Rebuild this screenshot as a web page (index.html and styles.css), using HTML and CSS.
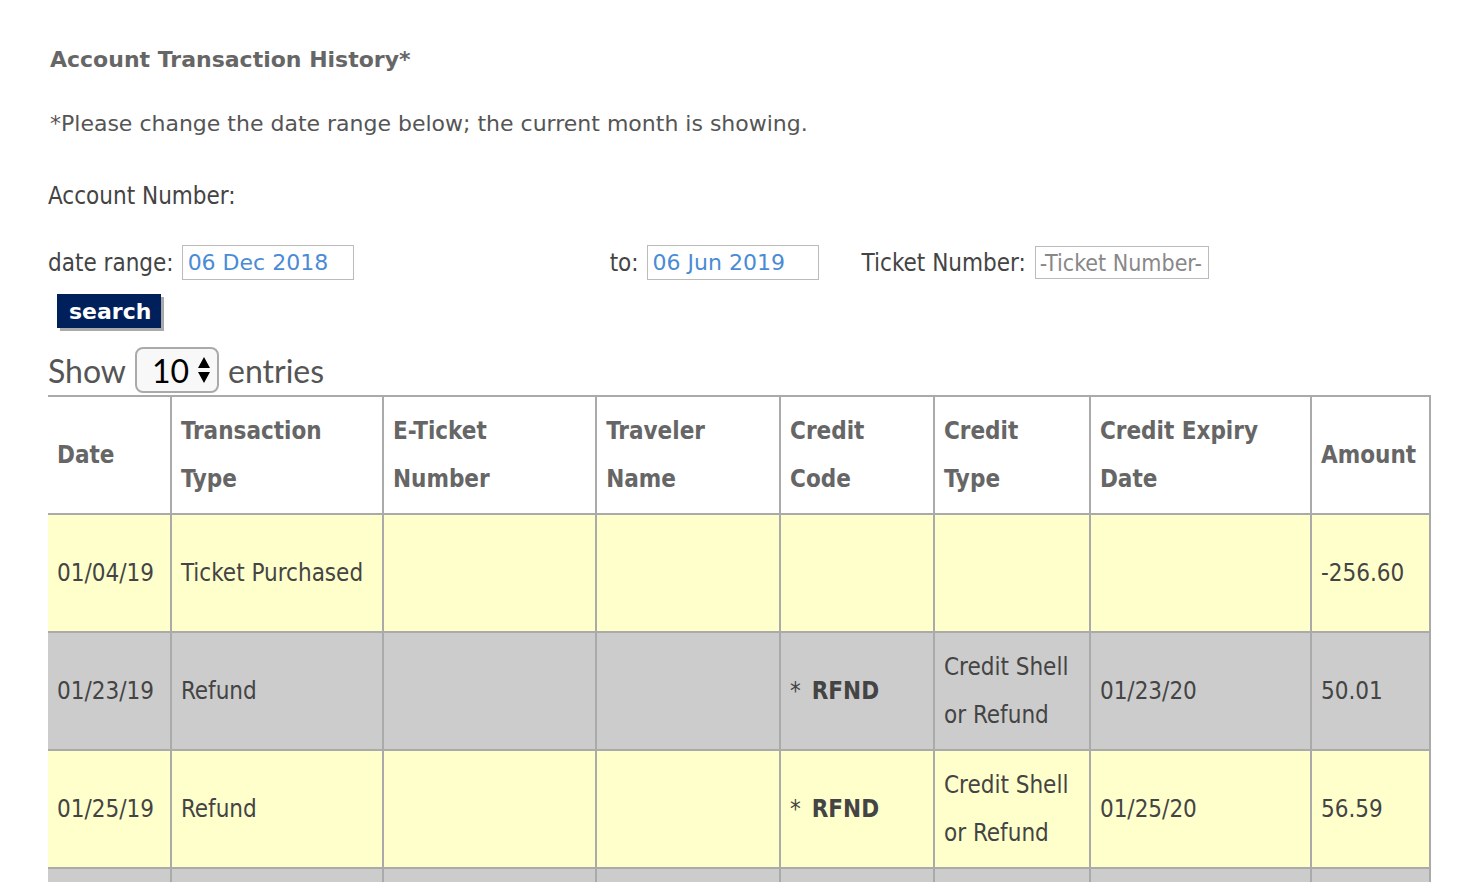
FILE: index.html
```html
<!DOCTYPE html>
<html lang="en">
<head>
    <meta charset="UTF-8">
    <title>Account Transaction History</title>
    <link rel="stylesheet" href="styles.css">
</head>
<body>
    <div class="history">
        <h3 class="title">Account Transaction History*</h3>
        <p class="note">*Please change the date range below; the current month is showing.</p>
        <div class="account">Account Number:</div>

        <form class="filters">
            <div class="filter-row">
                <label class="field">date range: <input type="text" class="date" value="06 Dec 2018"></label>
                <label class="field field-to">to: <input type="text" class="date" value="06 Jun 2019"></label>
                <label class="field field-ticket">Ticket Number: <input type="text" class="ticket" placeholder="-Ticket Number-"></label>
            </div>
            <button type="button" class="search">search</button>
        </form>

        <div class="length">
            Show
            <span class="select">10
                <svg width="14" height="30" viewBox="0 0 14 30"><path d="M7 2 L13 13 L1 13 Z M1 17 L13 17 L7 28 Z" fill="#000"/></svg>
            </span>
            entries
        </div>

        <table class="transactions">
            <thead>
                <tr>
                    <th class="c-date">Date</th>
                    <th class="c-type">Transaction<br>Type</th>
                    <th class="c-ticket">E-Ticket<br>Number</th>
                    <th class="c-name">Traveler<br>Name</th>
                    <th class="c-code">Credit<br>Code</th>
                    <th class="c-ctype">Credit<br>Type</th>
                    <th class="c-expiry">Credit Expiry<br>Date</th>
                    <th class="c-amount">Amount</th>
                </tr>
            </thead>
            <tbody>
                <tr class="odd">
                    <td>01/04/19</td>
                    <td>Ticket Purchased</td>
                    <td></td>
                    <td></td>
                    <td></td>
                    <td></td>
                    <td></td>
                    <td>-256.60</td>
                </tr>
                <tr class="even">
                    <td>01/23/19</td>
                    <td>Refund</td>
                    <td></td>
                    <td></td>
                    <td>* <b>RFND</b></td>
                    <td>Credit Shell<br>or Refund</td>
                    <td>01/23/20</td>
                    <td>50.01</td>
                </tr>
                <tr class="odd">
                    <td>01/25/19</td>
                    <td>Refund</td>
                    <td></td>
                    <td></td>
                    <td>* <b>RFND</b></td>
                    <td>Credit Shell<br>or Refund</td>
                    <td>01/25/20</td>
                    <td>56.59</td>
                </tr>
                <tr class="even">
                    <td></td>
                    <td></td>
                    <td></td>
                    <td></td>
                    <td></td>
                    <td></td>
                    <td></td>
                    <td></td>
                </tr>
            </tbody>
        </table>
    </div>
</body>
</html>
```

FILE: styles.css
```css
body {
    margin: 0;
    background: #fff;
    font-family: "DejaVu Sans", Verdana, sans-serif;
    color: #444;
}

.history {
    padding: 47px 0 0 48px;
    width: 1383px;
}

.title {
    margin: 0 0 0 2px;
    font-size: 22px;
    line-height: 26px;
    font-weight: bold;
    color: #666;
}

.note {
    margin: 38px 0 0 2px;
    font-size: 22px;
    line-height: 26px;
    color: #555;
}

.account {
    margin-top: 45px;
    font-family: "DejaVu Sans Condensed", Tahoma, sans-serif;
    font-size: 24px;
    line-height: 28px;
    color: #444;
}

.filters {
    margin-top: 35px;
}

.filter-row {
    display: flex;
    align-items: center;
    height: 35px;
    font-family: "DejaVu Sans Condensed", Tahoma, sans-serif;
    font-size: 24px;
    color: #444;
}

.field {
    display: inline-flex;
    align-items: center;
    gap: 8px;
}

.field-to {
    margin-left: 256px;
}

.field-ticket {
    margin-left: 43px;
    gap: 9px;
}

.field input {
    box-sizing: border-box;
    height: 35px;
    border: 1px solid #bbb;
    padding: 2px 5px;
    font-family: "DejaVu Sans", Verdana, sans-serif;
    font-size: 22px;
    color: #4a8bd6;
    outline: none;
}

.date {
    width: 172px;
}

.field .ticket {
    width: 174px;
    height: 33px;
    padding: 2px 4px;
    font-family: "DejaVu Sans Condensed", Tahoma, sans-serif;
    font-size: 23px;
}

.ticket::placeholder {
    color: #888;
}

.search {
    display: block;
    margin: 14px 0 0 9px;
    padding: 0 12px;
    width: 104px;
    height: 34px;
    border: none;
    background: #00205b;
    color: #fff;
    font-family: "DejaVu Sans", Verdana, sans-serif;
    font-size: 22px;
    font-weight: bold;
    box-shadow: 3px 3px 0 #aaa;
}

.length {
    display: flex;
    align-items: center;
    gap: 9px;
    height: 46px;
    margin-top: 19px;
    font-family: Lato, "Noto Sans", sans-serif;
    font-size: 32px;
    color: #555;
}

.select {
    display: inline-flex;
    align-items: center;
    justify-content: space-between;
    box-sizing: border-box;
    width: 84px;
    height: 46px;
    padding: 0 6px 0 15px;
    border: 2px solid #aaa;
    border-radius: 8px;
    background: #f8f8f8;
    color: #000;
}

.transactions {
    width: 1383px;
    border-collapse: collapse;
    margin-top: 2px;
    font-family: "DejaVu Sans Condensed", Tahoma, sans-serif;
    font-size: 24px;
    color: #444;
}

.transactions th,
.transactions td {
    height: 96px;
    padding: 10px 9px;
    border: 2px solid #aaa;
    text-align: left;
    vertical-align: middle;
    line-height: 48px;
}

.transactions tr > :first-child {
    border-left: none;
}

.transactions th {
    background: #fff;
    color: #666;
    font-weight: bold;
}

.transactions td b {
    margin-left: 4px;
    color: #444;
}

.odd td {
    background: #ffffcc;
}

.even td {
    background: #cccccc;
}

.c-date { width: 104px; }
.c-type { width: 193px; }
.c-ticket { width: 195px; }
.c-name { width: 165px; }
.c-code { width: 135px; }
.c-ctype { width: 137px; }
.c-expiry { width: 203px; }
.c-amount { width: 99px; }
```
